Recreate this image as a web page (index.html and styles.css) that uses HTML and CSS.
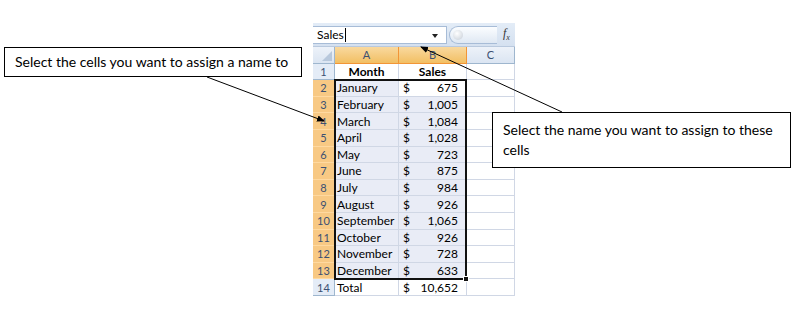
FILE: index.html
```html
<!DOCTYPE html>
<html lang="en">
<head>
  <meta charset="UTF-8">
  <title>Assign a name to cells</title>
  <link rel="stylesheet" href="styles.css">
</head>
<body>
  <div class="page">

    <!-- Spreadsheet -->
    <div class="sheet">
      <div class="formula-bar">
        <div class="name-box">
          <span class="name-text">Sales</span><span class="caret"></span>
          <span class="dropdown"></span>
        </div>
        <div class="fx-pill"><span class="fx-dot"></span></div>
        <div class="fx">f<sub>x</sub></div>
      </div>

      <div class="grid">
        <div class="corner"><span class="corner-tri"></span></div>
        <div class="col-head on">A</div>
        <div class="col-head on">B</div>
        <div class="col-head">C</div>

        <div class="row-head">1</div>
        <div class="cell bold center">Month</div>
        <div class="cell bold center">Sales</div>
        <div class="cell"></div>

        <div class="row-head on">2</div>
        <div class="cell sel">January</div>
        <div class="cell money"><span>$</span><span>675</span></div>
        <div class="cell"></div>

        <div class="row-head on">3</div>
        <div class="cell sel">February</div>
        <div class="cell sel money"><span>$</span><span>1,005</span></div>
        <div class="cell"></div>

        <div class="row-head on">4</div>
        <div class="cell sel">March</div>
        <div class="cell sel money"><span>$</span><span>1,084</span></div>
        <div class="cell"></div>

        <div class="row-head on">5</div>
        <div class="cell sel">April</div>
        <div class="cell sel money"><span>$</span><span>1,028</span></div>
        <div class="cell"></div>

        <div class="row-head on">6</div>
        <div class="cell sel">May</div>
        <div class="cell sel money"><span>$</span><span>723</span></div>
        <div class="cell"></div>

        <div class="row-head on">7</div>
        <div class="cell sel">June</div>
        <div class="cell sel money"><span>$</span><span>875</span></div>
        <div class="cell"></div>

        <div class="row-head on">8</div>
        <div class="cell sel">July</div>
        <div class="cell sel money"><span>$</span><span>984</span></div>
        <div class="cell"></div>

        <div class="row-head on">9</div>
        <div class="cell sel">August</div>
        <div class="cell sel money"><span>$</span><span>926</span></div>
        <div class="cell"></div>

        <div class="row-head on">10</div>
        <div class="cell sel">September</div>
        <div class="cell sel money"><span>$</span><span>1,065</span></div>
        <div class="cell"></div>

        <div class="row-head on">11</div>
        <div class="cell sel">October</div>
        <div class="cell sel money"><span>$</span><span>926</span></div>
        <div class="cell"></div>

        <div class="row-head on">12</div>
        <div class="cell sel">November</div>
        <div class="cell sel money"><span>$</span><span>728</span></div>
        <div class="cell"></div>

        <div class="row-head on">13</div>
        <div class="cell sel">December</div>
        <div class="cell sel money"><span>$</span><span>633</span></div>
        <div class="cell"></div>

        <div class="row-head">14</div>
        <div class="cell">Total</div>
        <div class="cell money"><span>$</span><span>10,652</span></div>
        <div class="cell"></div>

        <!-- selection outline sits over A2:B13 -->
        <div class="selection"><span class="fill-handle"></span></div>
      </div>
    </div>

    <!-- Callouts -->
    <div class="callout callout-left">Select the cells you want to assign a name to</div>
    <div class="callout callout-right">Select the name you want to assign to these cells</div>

    <svg class="arrows" width="811" height="310" viewBox="0 0 811 310">
      <defs>
        <marker id="head" markerWidth="8" markerHeight="8" refX="7" refY="4" orient="auto" markerUnits="userSpaceOnUse">
          <path d="M0,0.8 L8,4 L0,7.2 Z" fill="#000"/>
        </marker>
      </defs>
      <line x1="207" y1="77" x2="324" y2="121" stroke="#000" stroke-width="1" marker-end="url(#head)"/>
      <line x1="562" y1="112" x2="421" y2="47" stroke="#000" stroke-width="1" marker-end="url(#head)"/>
    </svg>

  </div>
</body>
</html>
```

FILE: styles.css
```css
/* Global */
* {
  margin: 0;
  padding: 0;
  box-sizing: border-box;
}

body {
  background: #fff;
  font-family: 'Lato', 'Liberation Sans', sans-serif;
  color: #000;
}

.page {
  position: relative;
  width: 811px;
  height: 310px;
  padding: 23px 0 0 313px;
  overflow: hidden;
}

/* Sheet */
.sheet {
  width: 202px;
}

.formula-bar {
  display: flex;
  align-items: center;
  height: 24px;
  background: linear-gradient(#e3ecf7, #d5e1f0);
  border-bottom: 1px solid #b9c9de;
}

.name-box {
  position: relative;
  display: flex;
  align-items: center;
  width: 134px;
  height: 18px;
  background: #fff;
  border: 1px solid #a7bcd7;
  border-left: none;
  padding-left: 4px;
  font-size: 12px;
}

.caret {
  display: inline-block;
  width: 1px;
  height: 14px;
  background: #000;
  margin-left: 1px;
}

.dropdown {
  position: absolute;
  right: 8px;
  top: 7px;
  border-left: 3px solid transparent;
  border-right: 3px solid transparent;
  border-top: 4px solid #222;
}

.fx-pill {
  position: relative;
  width: 48px;
  height: 18px;
  margin-left: 2px;
  border: 1px solid #a7bcd7;
  border-right: none;
  border-radius: 9px 0 0 9px;
  background: linear-gradient(#fbfdff, #dfe8f3);
}

.fx-dot {
  position: absolute;
  left: 3px;
  top: 3px;
  width: 10px;
  height: 10px;
  border-radius: 50%;
  background: radial-gradient(circle at 40% 35%, #fff, #c4ccd6);
}

.fx {
  margin-left: 6px;
  font-family: 'Liberation Serif', serif;
  font-style: italic;
  font-size: 12px;
  color: #333;
}

.fx sub {
  font-size: 8px;
}

/* Grid */
.grid {
  position: relative;
  display: grid;
  grid-template-columns: 22px 64px 68px 48px;
  grid-auto-rows: 16.6px;
  font-size: 12px;
}

.corner,
.col-head,
.row-head {
  background: linear-gradient(#edf2f9, #dbe5f2);
  border-right: 1px solid #9eb6ce;
  border-bottom: 1px solid #9eb6ce;
  color: #3b5072;
  font-family: 'Lato', sans-serif;
  font-size: 11px;
  display: flex;
  align-items: center;
  justify-content: center;
}

.corner {
  position: relative;
}

.corner-tri {
  position: absolute;
  right: 2px;
  bottom: 2px;
  border-left: 10px solid transparent;
  border-bottom: 10px solid #b8c8dc;
}

.col-head.on {
  background: linear-gradient(#f9d99f, #f2bf63);
  border-right-color: #f29536;
  border-bottom-color: #f29536;
}

.row-head {
  background: #e4ecf7;
  border-right-color: #9eb6ce;
  border-bottom-color: #9eb6ce;
}

.row-head.on {
  background: #f8c984;
  border-right-color: #f29536;
  border-bottom-color: #ffd9a0;
}

.cell {
  display: flex;
  align-items: center;
  padding: 0 2px;
  border-right: 1px solid #d0d7e5;
  border-bottom: 1px solid #d0d7e5;
  white-space: nowrap;
  overflow: hidden;
}

.cell.sel {
  background: #e9ecf6;
}

.cell.bold {
  font-weight: 700;
}

.cell.center {
  justify-content: center;
}

.cell.money {
  justify-content: space-between;
  padding: 0 8px 0 4px;
}

.selection {
  grid-column: 2 / 4;
  grid-row: 3 / 15;
  position: absolute;
  top: -1px;
  left: -1px;
  right: 0;
  bottom: -1px;
  border: 2px solid #111;
  pointer-events: none;
}

.fill-handle {
  position: absolute;
  right: -4px;
  bottom: -4px;
  width: 6px;
  height: 6px;
  background: #111;
  border: 1px solid #fff;
}

/* Callouts */
.callout {
  position: absolute;
  background: #fff;
  border: 1px solid #000;
  font-family: 'Lato', 'Liberation Sans', sans-serif;
  font-size: 14px;
  color: #000;
  padding-left: 10px;
}

.callout-left {
  left: 4px;
  top: 47px;
  width: 298px;
  height: 30px;
  line-height: 28px;
}

.callout-right {
  left: 492px;
  top: 112px;
  width: 299px;
  height: 56px;
  padding-top: 7px;
  padding-right: 10px;
  line-height: 20px;
}

.arrows {
  position: absolute;
  left: 0;
  top: 0;
  pointer-events: none;
}
```
